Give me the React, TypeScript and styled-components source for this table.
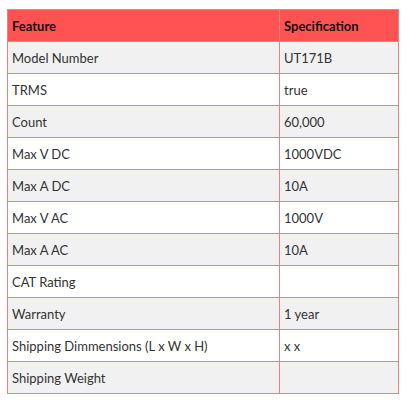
import React from 'react';
import styled, { createGlobalStyle } from 'styled-components';

const GlobalStyle = createGlobalStyle`
  html, body {
    margin: 0;
    padding: 0;
    background: #ffffff;
  }
`;

const Page = styled.div`
  padding: 9px 12px 0 7px;
  font-family: Lato, 'Liberation Sans', sans-serif;
`;

const SpecTable = styled.table`
  width: 392px;
  border-collapse: collapse;
  font-size: 13px;
  color: #333333;
`;

const HeadCell = styled.th<{ $wide?: boolean }>`
  height: 32px;
  padding: 0 4px;
  width: ${props => (props.$wide ? '272px' : 'auto')};
  text-align: left;
  font-weight: 700;
  color: #111111;
  background: #ff5252;
  border: 1px solid #f08080;
  box-sizing: border-box;
`;

const Row = styled.tr<{ $striped: boolean }>`
  background: ${props => (props.$striped ? '#f1f1f1' : '#ffffff')};
`;

const Cell = styled.td`
  height: 32px;
  padding: 0 4px;
  border: 1px solid #f08080;
  box-sizing: border-box;
`;

const specs: [string, string][] = [
  ['Model Number', 'UT171B'],
  ['TRMS', 'true'],
  ['Count', '60,000'],
  ['Max V DC', '1000VDC'],
  ['Max A DC', '10A'],
  ['Max V AC', '1000V'],
  ['Max A AC', '10A'],
  ['CAT Rating', ''],
  ['Warranty', '1 year'],
  ['Shipping Dimmensions (L x W x H)', 'x x'],
  ['Shipping Weight', ''],
];

export default function App() {
  return (
    <>
      <GlobalStyle />
      <Page>
        <SpecTable>
          <thead>
            <tr>
              <HeadCell $wide>Feature</HeadCell>
              <HeadCell>Specification</HeadCell>
            </tr>
          </thead>
          <tbody>
            {specs.map(([feature, value], i) => (
              <Row key={feature} $striped={i % 2 === 0}>
                <Cell>{feature}</Cell>
                <Cell>{value}</Cell>
              </Row>
            ))}
          </tbody>
        </SpecTable>
      </Page>
    </>
  );
}
